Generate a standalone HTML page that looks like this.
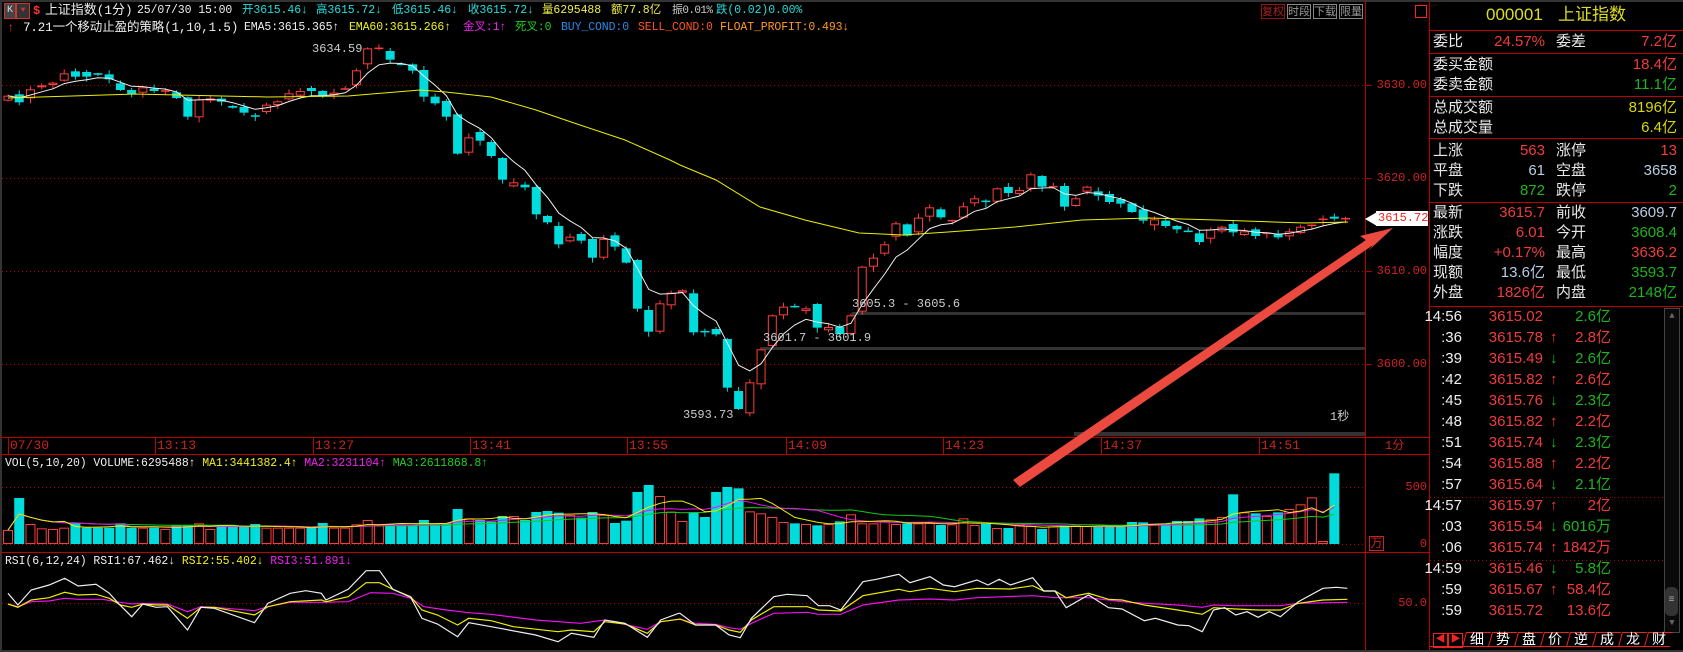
<!DOCTYPE html>
<html><head><meta charset="utf-8"><style>
body{margin:0;background:#000;width:1683px;height:652px;overflow:hidden;position:relative;font-family:"Liberation Mono","Noto Sans CJK SC",monospace;}
.t{position:absolute;white-space:pre;font-size:12px;line-height:14px;}
.h{position:absolute;white-space:pre;font-size:11.5px;line-height:14px;letter-spacing:-0.1px}
.p{position:absolute;white-space:pre;font-family:"Liberation Sans","Noto Sans CJK SC",sans-serif;font-size:15px;line-height:18px;}
.r{text-align:right}
.btn{position:absolute;top:4px;width:22px;height:13px;border:1px solid #888;color:#999;font-size:11px;line-height:13px;text-align:center;font-family:"Noto Sans CJK SC",sans-serif}
</style></head><body>
<svg id="s" width="1683" height="652" style="position:absolute;left:0;top:0"></svg>

<div style="position:absolute;left:4px;top:3px;width:10px;height:14px;border:1px solid #c33;background:#444;color:#ddd;font-size:10px;line-height:14px;text-align:center">K</div>
<div style="position:absolute;left:16px;top:3px;width:12px;height:14px;border:1px solid #c33;background:#333;color:#c33;font-size:8px;line-height:14px;text-align:center">▼</div>
<div class="t" style="left:33px;top:4px;color:#f33;font-weight:bold">$</div>
<div class="h" style="left:45px;top:4px;color:#eee;font-size:13px">上证指数(1分)</div>
<div class="h" style="left:137px;top:4px;color:#eee">25/07/30 15:00</div>
<div class="h" style="left:242px;top:4px;color:#2dd">开3615.46↓</div>
<div class="h" style="left:316px;top:4px;color:#2dd">高3615.72↓</div>
<div class="h" style="left:392px;top:4px;color:#2dd">低3615.46↓</div>
<div class="h" style="left:468px;top:4px;color:#2dd">收3615.72↓</div>
<div class="h" style="left:542px;top:4px;color:#ee4">量6295488</div>
<div class="h" style="left:611px;top:4px;color:#ee4">额77.8亿</div>
<div class="h" style="left:672px;top:4px;color:#ccc;font-size:11px;letter-spacing:-0.6px">振0.01%</div>
<div class="h" style="left:716px;top:4px;color:#2dd">跌(0.02)0.00%</div>
<div class="btn" style="left:1261px;border-color:#911;color:#a22">复权</div>
<div class="btn" style="left:1287px">时段</div>
<div class="btn" style="left:1313px">下载</div>
<div class="btn" style="left:1339px">限量</div>
<div style="position:absolute;left:1415px;top:5px;width:10px;height:11px;border:1px solid #f22"></div>
<div class="t" style="left:7px;top:21px;color:#f22;font-weight:bold">↑</div>
<div class="h" style="left:23px;top:21px;color:#eee;font-size:12.5px">7.21一个移动止盈的策略(1,10,1.5)</div>
<div class="h" style="left:244px;top:21px;color:#eee">EMA5:3615.365↑</div>
<div class="h" style="left:349px;top:21px;color:#ee2">EMA60:3615.266↑</div>
<div class="h" style="left:463px;top:21px;color:#e2e">金叉:1↑</div>
<div class="h" style="left:515px;top:21px;color:#2c2">死叉:0</div>
<div class="h" style="left:561px;top:21px;color:#2a8ae8">BUY_COND:0</div>
<div class="h" style="left:638px;top:21px;color:#f52">SELL_COND:0</div>
<div class="h" style="left:720px;top:21px;color:#f92">FLOAT_PROFIT:0.493↓</div>

<div class="t" style="left:312px;top:42px;color:#ccc">3634.59</div>
<div class="t" style="left:683px;top:408px;color:#ccc">3593.73</div>
<div class="t" style="left:852px;top:297px;color:#ccc">3605.3 - 3605.6</div>
<div class="t" style="left:763px;top:331px;color:#ccc">3601.7 - 3601.9</div>
<div class="t" style="left:1330px;top:410px;color:#ccc">1秒</div>
<div class="t r" style="left:1366px;width:61px;top:78px;color:#c22">3630.00</div>
<div class="t r" style="left:1366px;width:61px;top:171px;color:#c22">3620.00</div>
<div class="t r" style="left:1366px;width:61px;top:264px;color:#c22">3610.00</div>
<div class="t r" style="left:1366px;width:61px;top:357px;color:#c22">3600.00</div>
<div style="position:absolute;left:1376px;top:211px;width:52px;height:15px;background:#fff"></div>
<div class="t" style="left:1378px;top:211px;color:#e22">3615.72</div>
<div class="t" style="left:1385px;top:439px;color:#c22">1分</div>
<div class="t r" style="left:1366px;width:61px;top:480px;color:#c22">500</div>
<div class="t r" style="left:1366px;width:61px;top:537px;color:#c22">0</div>
<div class="t" style="left:1369px;top:536px;width:13px;height:13px;border:1px solid #c22;color:#c22;text-align:center">万</div>
<div class="t r" style="left:1366px;width:61px;top:596px;color:#c22">50.0</div>
<div class="h" style="left:5px;top:457px;color:#eee">VOL(5,10,20) VOLUME:6295488↑ <span style="color:#ee2">MA1:3441382.4↑</span> <span style="color:#e2e">MA2:3231104↑</span> <span style="color:#2c2">MA3:2611868.8↑</span></div>
<div class="h" style="left:5px;top:555px;color:#eee">RSI(6,12,24) RSI1:67.462↓ <span style="color:#ee2">RSI2:55.402↓</span> <span style="color:#e2e">RSI3:51.891↓</span></div>
<div id="tl"></div>

<div class="p" style="left:1486px;top:5px;color:#dd2;font-size:17px;line-height:20px">000001</div>
<div class="p" style="left:1558px;top:5px;color:#dd2;font-size:17px;line-height:20px">上证指数</div>
<div id="rp"></div>
<div id="tk"></div>
<div style="position:absolute;left:1664px;top:308px;width:14px;height:323px;border:1px solid #444;background:#0a0a0a"></div>
<div style="position:absolute;left:1665px;top:309px;width:14px;height:14px;color:#666;font-size:9px;text-align:center;line-height:14px">▲</div>
<div style="position:absolute;left:1665px;top:616px;width:14px;height:14px;color:#666;font-size:9px;text-align:center;line-height:14px">▼</div>
<div style="position:absolute;left:1665px;top:587px;width:13px;height:29px;background:#333;border-radius:5px;color:#aaa;font-size:10px;text-align:center;line-height:28px">≡</div>
<div style="position:absolute;left:1433px;top:633px;width:13px;height:13px;border:1px solid #e22;color:#e22;font-size:10px;line-height:13px;text-align:center">◀</div>
<div style="position:absolute;left:1448px;top:633px;width:13px;height:13px;border:1px solid #e22;color:#e22;font-size:10px;line-height:13px;text-align:center">▶</div>
<div id="tabs"></div>

<script>
var S=document.getElementById('s'),h='';
function L(x1,y1,x2,y2,c,w,d){h+='<line x1="'+x1+'" y1="'+y1+'" x2="'+x2+'" y2="'+y2+'" stroke="'+c+'" stroke-width="'+(w||1)+'"'+(d?' stroke-dasharray="'+d+'"':'')+'/>';}
function R(x,y,w,hh,f,s){h+='<rect x="'+x+'" y="'+y+'" width="'+w+'" height="'+hh+'" fill="'+f+'"'+(s?' stroke="'+s+'"':'')+'/>';}
function P(pts,c,w){h+='<polyline fill="none" stroke="'+c+'" stroke-width="'+(w||1)+'" points="'+pts.map(function(p){return p[0].toFixed(1)+','+p[1].toFixed(1)}).join(' ')+'"/>';}
R(0,0,1683,2,'#333');R(0,650,1683,2,'#333');R(0,0,2,652,'#333');
[85,178,271,364].forEach(function(y){L(2,y+.5,1365,y+.5,'#a00','1','1,3');L(1365,y+.5,1372,y+.5,'#a00');});
L(2,487.5,1365,487.5,'#a00',1,'1,3');L(2,544.5,1365,544.5,'#a00',1,'1,3');L(2,603.5,1365,603.5,'#a00',1,'1,3');
L(0,437.5,1429,437.5,'#b00');L(0,454.5,1429,454.5,'#b00');L(0,552.5,1429,552.5,'#b00');
L(1365.5,0,1365.5,650,'#b00');L(1429.5,0,1429.5,650,'#b00');
[30,53,96,138,202,306].forEach(function(y){L(1429,y+.5,1683,y+.5,'#b00');});
L(1430,497.5,1663,497.5,'#a00',1,'1,3');L(1430,560.5,1663,560.5,'#a00',1,'1,3');
var tl=[['07/30',8],['13:13',155],['13:27',313],['13:41',470],['13:55',627],['14:09',786],['14:23',943],['14:37',1101],['14:51',1259]],th='';
tl.forEach(function(t){L(t[1]+.5,437,t[1]+.5,454,'#b00');th+='<div class="t" style="left:'+(t[1]+2)+'px;top:439px;color:#c22;font-size:13px">'+t[0]+'</div>';});
document.getElementById('tl').innerHTML=th;
R(852,312,513,3,'#333');R(762,347,603,3,'#333');R(1074,432,291,4,'#333');
var C=[[197,212,'r'],[193,217,'c'],[178,205,'r'],[166,172,'r'],[158,165,'r'],[130,152,'r'],[124,140,'c'],[126,140,'c'],[132,132,'c'],[133,148,'c'],[160,180,'c'],[180,193,'c'],[172,188,'r'],[176,183,'c'],[183,183,'r'],[187,204,'c'],[202,260,'c'],[208,262,'r'],[205,212,'r'],[206,215,'c'],[228,233,'c'],[231,248,'c'],[258,258,'c'],[224,246,'r'],[214,225,'r'],[190,208,'r'],[183,197,'r'],[174,183,'c'],[183,198,'c'],[188,195,'r'],[177,177,'r'],[121,166,'r'],[55,103,'r'],[55,55,'r'],[63,89,'c'],[103,103,'c'],[103,122,'c'],[120,200,'c'],[200,220,'c'],[213,260,'c'],[253,371,'c'],[322,368,'r'],[306,332,'c'],[336,378,'c'],[384,449,'c'],[457,469,'r'],[464,472,'c'],[471,553,'c'],[558,577,'c'],[588,643,'c'],[620,634,'r'],[612,632,'c'],[627,683,'c'],[627,683,'r'],[616,650,'c'],[655,698,'c'],[690,836,'c'],[840,905,'c'],[820,905,'r'],[788,826,'r'],[781,788,'r'],[790,907,'c'],
[905,905,'c'],[897,913,'c'],[927,1073,'c'],[1083,1137,'c'],[1057,1150,'r'],[958,1063,'r'],[856,948,'r'],[830,856,'r'],[830,830,'c'],[835,843,'r'],[822,893,'c'],[891,901,'r'],[891,912,'c'],[856,912,'r'],[710,845,'r'],[683,710,'r'],[643,671,'r'],[580,620,'r'],[583,617,'c'],[563,607,'r'],[532,560,'r'],[538,562,'c'],[572,572,'r'],[529,563,'r'],[505,520,'r'],[514,518,'c'],[475,515,'r'],[471,489,'c'],[480,492,'r'],[433,476,'r'],[438,470,'c'],[470,470,'r'],[468,530,'c'],[505,528,'r'],[470,485,'r'],[484,497,'c'],[492,516,'c'],[507,521,'c'],[520,546,'c'],[538,572,'c'],[568,586,'r'],[572,588,'c'],[588,598,'c'],[604,604,'c'],[610,636,'c'],[598,626,'r'],[590,604,'r'],[582,607,'c'],[604,615,'r'],[598,618,'c'],[610,610,'r'],[612,622,'c'],[604,619,'r'],[590,609,'r'],[586,590,'r'],[568,572,'r'],[560,566,'c'],[566,568,'r']];
var RED='#ff3c3c',CY='#00dcdc',closes=[],xs=[];
C.forEach(function(c,i){var x=8+i*11.24,t=30+c[0]/3,b=30+c[1]/3,col=c[2]=='r'?RED:CY;xs.push(x);
 closes.push(c[2]=='r'?t:b);
 var wl=(i*7%5)+1,wh=(i*3%4)+1;L(x,t-wh,x,b+wl,col);
 if(b-t<1.5){L(x-4.5,t,x+4.5,t,col,1.5);}
 else if(c[2]=='r')R(x-4,t+.5,8,b-t-1,'#000',RED);else R(x-4.5,t,9,b-t,CY);});
var e=closes[0],ep=[];closes.forEach(function(c,i){e=e+(c-e)*2/6;ep.push([xs[i],e]);});P(ep,'#eee',1);
P([[8,98],[134,94],[268,97],[348,96],[420,90],[446,92],[491,97],[536,110],[580,125],[625,140],[670,160],[680,165],[716,180],[760,207],[805,220],[859,233],[903,235],[948,232],[1015,227],[1082,220],[1149,218],[1216,220],[1305,223],[1348,222]],'#ee0',1);
var V1=[390,294,372,385,387,383,370,383,383,383,370,383,383,383,387,375,375,370,387,375,380,380,372,383,383,383,383,383,369,383,383,373,360,373,373,373,375,360,373,370,327,355,360,365,348,348,360,336,333,338,345,353,336,345,369,362,276,255,288,335,363],
V2=[157,173,186,111,96,100,169,175,186,201,205,207,211,207,199,178,205,205,198,207,205,205,204,210,208,190,210,207,219,219,210,213,222,214,213,211,213,215,215,215,201,202,206,206,198,198,190,193,186,118,172,175,183,172,162,148,127,258,55];
var vt=V1.map(function(v){return 400+v/3;}).concat(V2.slice(1).map(function(v){return 455+v/3;}));
var vv=[];
vt.forEach(function(t,i){var x=xs[i],col=C[i][2];vv.push(544-t);
 if(col=='r')R(x-4.5,t+.5,9,544-t-1,'#000',RED);else R(x-5,t,10,544-t,CY);});
function ma(n,c){var p=[];for(var i=0;i<vv.length;i++){var s=0,k=0;for(var j=Math.max(0,i-n+1);j<=i;j++){s+=vv[j];k++;}p.push([xs[i],544-s/k]);}P(p,c,1);}
ma(20,'#1c1');ma(10,'#e1e');ma(5,'#ee0');
// RSI hardcoded from reference
function cv(a,b){var o=[];a.forEach(function(p){o.push([p[0]/2.24,400+p[1]/3]);});b.forEach(function(p){o.push([680+p[0]/2.24,455+p[1]/3]);});return o;}
var MW=cv([[18,612],[40,620],[70,605],[110,603],[145,595],[175,598],[230,598],[260,605],[295,612],[320,610],[375,612],[420,635],[450,620],[480,622],[570,632],[600,620],[650,607],[720,607],[780,605],[830,578],[880,580],[920,595],[950,620],[1000,630],[1050,638],[1100,643],[1200,660],[1300,670],[1355,660],[1450,688],[1480,665],[1520,658],[1520,658]],
[[0,493],[35,505],[80,508],[110,518],[135,523],[160,505],[210,475],[285,472],[310,478],[360,478],[410,450],[490,435],[560,432],[615,435],[665,428],[790,422],[840,428],[915,428],[990,440],[1040,445],[1115,450],[1170,457],[1195,450],[1245,452],[1345,452],[1385,445],[1495,442]]);
var YW=cv([[18,612],[40,622],[70,600],[110,593],[145,577],[175,585],[215,583],[245,595],[270,615],[295,622],[320,612],[350,615],[375,615],[420,655],[450,622],[480,622],[570,645],[600,620],[650,605],[720,600],[730,605],[780,590],[820,548],[850,548],[880,568],[920,590],[945,630],[980,645],[1025,675],[1050,655],[1100,662],[1150,680],[1250,695],[1280,690],[1330,695],[1355,665],[1400,672],[1450,700],[1480,665],[1520,658]],
[[0,492],[35,510],[80,510],[110,525],[135,532],[160,495],[210,455],[285,455],[310,465],[360,468],[410,422],[490,403],[515,410],[560,400],[615,410],[665,400],[740,402],[790,392],[815,408],[840,408],[865,428],[915,415],[960,433],[990,435],[1040,450],[1115,465],[1170,478],[1195,458],[1245,462],[1295,465],[1345,465],[1385,445],[1440,435],[1495,433]]);
var WW=cv([[18,580],[40,615],[70,570],[110,555],[145,535],[175,558],[215,553],[245,580],[265,610],[295,650],[320,612],[350,622],[375,620],[420,690],[450,622],[480,625],[570,668],[600,610],[650,580],[685,572],[720,580],[730,600],[780,568],[820,512],[850,512],[880,568],[920,592],[945,655],[980,672],[1025,710],[1050,668],[1100,680],[1200,705],[1250,725],[1280,700],[1330,712],[1355,660],[1400,670],[1450,712],[1480,660],[1520,640]],
[[0,475],[35,510],[80,510],[110,540],[135,548],[160,490],[210,425],[240,418],[285,422],[310,452],[335,452],[360,465],[410,380],[440,373],[490,358],[515,383],[560,365],[590,390],[615,395],[665,375],[690,390],[715,373],[740,390],[790,368],[815,408],[840,408],[865,458],[915,420],[960,458],[990,462],[1040,497],[1065,490],[1115,510],[1140,512],[1170,530],[1195,465],[1220,458],[1245,480],[1270,470],[1295,487],[1320,470],[1345,485],[1385,440],[1440,400],[1470,397],[1495,400]]);
P(MW,'#e1e',1.2);P(YW,'#ee0',1.2);P(WW,'#eee',1.2);
h+='<polygon points="1013,480 1020,487 1373,245 1368,251 1393,228 1360,236 1366,240" fill="#ec4a3f"/>';
h+='<polygon points="1365,219 1377,212 1377,226" fill="#fff"/>';
S.innerHTML=h;
var rp='',W='#e8e8e8',RD='#f03c3c',GR='#1eb41e',BL='#b8cce4',YL='#d8d800';
function row(y,l1,v1,c1,l2,v2,c2){rp+='<div class="p" style="left:1433px;top:'+(y-9)+'px;color:'+W+'">'+l1+'</div>';
 if(v1)rp+='<div class="p r" style="left:1470px;width:75px;top:'+(y-9)+'px;color:'+c1+'">'+v1+'</div>';
 if(l2)rp+='<div class="p" style="left:1556px;top:'+(y-9)+'px;color:'+W+'">'+l2+'</div>';
 if(v2)rp+='<div class="p r" style="left:1590px;width:87px;top:'+(y-9)+'px;color:'+c2+'">'+v2+'</div>';}
row(42,'委比','24.57%',RD,'委差','7.2亿',RD);
row(65,'委买金额','',0,'','18.4亿',RD);row(85,'委卖金额','',0,'','11.1亿',GR);
row(108,'总成交额','',0,'','8196亿',YL);row(128,'总成交量','',0,'','6.4亿',YL);
row(151,'上涨','563',RD,'涨停','13',RD);row(171,'平盘','61',BL,'空盘','3658',BL);row(191,'下跌','872',GR,'跌停','2',GR);
row(213,'最新','3615.7',RD,'前收','3609.7',BL);row(233,'涨跌','6.01',RD,'今开','3608.4',GR);row(253,'幅度','+0.17%',RD,'最高','3636.2',RD);row(273,'现额','13.6亿',BL,'最低','3593.7',GR);row(293,'外盘','1826亿',RD,'内盘','2148亿',GR);
document.getElementById('rp').innerHTML=rp;
var T=[['14:56','3615.02','','2.6亿',GR],[':36','3615.78','↑','2.8亿',RD],[':39','3615.49','↓','2.6亿',GR],[':42','3615.82','↑','2.6亿',RD],[':45','3615.76','↓','2.3亿',GR],[':48','3615.82','↑','2.2亿',RD],[':51','3615.74','↓','2.3亿',GR],[':54','3615.88','↑','2.2亿',RD],[':57','3615.64','↓','2.1亿',GR],['14:57','3615.97','↑','2亿',RD],[':03','3615.54','↓','6016万',GR],[':06','3615.74','↑','1842万',RD],['14:59','3615.46','↓','5.8亿',GR],[':59','3615.67','↑','58.4亿',RD],[':59','3615.72','','13.6亿',RD]],tk='';
T.forEach(function(t,k){var y=317+21*k-9;
 tk+='<div class="p r" style="left:1420px;width:42px;top:'+y+'px;color:#f0f0f0">'+t[0]+'</div>';
 tk+='<div class="p r" style="left:1480px;width:63px;top:'+y+'px;color:'+RD+'">'+t[1]+'</div>';
 if(t[2])tk+='<div class="p" style="left:1550px;top:'+y+'px;color:'+(t[2]=='↑'?RD:GR)+'">'+t[2]+'</div>';
 tk+='<div class="p r" style="left:1560px;width:51px;top:'+y+'px;color:'+t[4]+'">'+t[3]+'</div>';});
document.getElementById('tk').innerHTML=tk;
var tb='',names=['细','势','盘','价','逆','成','龙','财'];
names.forEach(function(n,i){var x=1464+i*26;tb+='<div style="position:absolute;left:'+x+'px;top:632px;width:24px;height:14px;border-top:1px solid #e22;border-left:1px solid #e22;transform:skewX(-15deg);"></div><div class="p" style="left:'+(x+6)+'px;top:631px;font-size:14px;line-height:16px;color:#fff">'+n+'</div>';});
tb+='<div style="position:absolute;left:1430px;top:646px;width:240px;height:1px;background:#e22"></div>';
document.getElementById('tabs').innerHTML=tb;
</script>
</body></html>
